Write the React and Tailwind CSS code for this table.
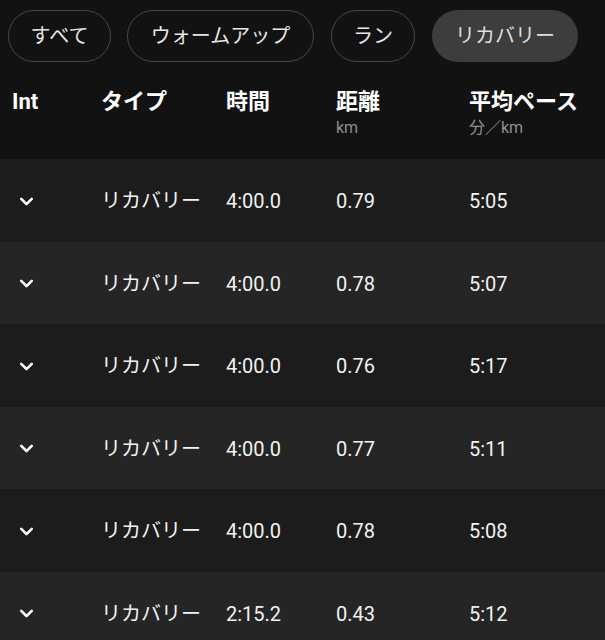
import { ChevronDown } from "lucide-react";

const tabs = [
  { label: "すべて", w: "w-[103px]", ml: "ml-2", active: false },
  { label: "ウォームアップ", w: "w-[187px]", ml: "ml-4", active: false },
  { label: "ラン", w: "w-[84px]", ml: "ml-[17px]", active: false },
  { label: "リカバリー", w: "w-[146px]", ml: "ml-[17px]", active: true },
];

const rows = [
  ["リカバリー", "4:00.0", "0.79", "5:05"],
  ["リカバリー", "4:00.0", "0.78", "5:07"],
  ["リカバリー", "4:00.0", "0.76", "5:17"],
  ["リカバリー", "4:00.0", "0.77", "5:11"],
  ["リカバリー", "4:00.0", "0.78", "5:08"],
  ["リカバリー", "2:15.2", "0.43", "5:12"],
];

export default function App() {
  return (
    <div
      className="w-[605px] h-[640px] overflow-hidden bg-[#121212] text-white"
      style={{ fontFamily: 'Roboto, "Noto Sans CJK JP", sans-serif' }}
    >
      {/* Filter pills */}
      <div className="flex pt-[10px] whitespace-nowrap">
        {tabs.map((t) => (
          <div
            key={t.label}
            className={
              t.w + " " + t.ml + " shrink-0 " +
              (t.active
                ? "h-[52px] rounded-full flex items-center justify-center bg-[#3d3d3d] text-[#dedede] text-[20px]"
                : "h-[52px] rounded-full flex items-center justify-center border-[1.5px] border-[#474747] text-[#e6e6e6] text-[20px]")
            }
          >
            {t.label}
          </div>
        ))}
      </div>

      {/* Header */}
      <div className="flex h-[97px] pt-[27px] pl-3 text-[22px] font-bold leading-[26px]">
        <div className="w-[89px]">Int</div>
        <div className="w-[125px]">タイプ</div>
        <div className="w-[110px]">時間</div>
        <div className="w-[133px]">
          <div>距離</div>
          <div className="text-[16px] font-normal text-[#8f8f8f] leading-[20px] mt-[3px]">km</div>
        </div>
        <div>
          <div>平均ペース</div>
          <div className="text-[16px] font-normal text-[#8f8f8f] leading-[20px] mt-[3px]">分／km</div>
        </div>
      </div>

      {/* Rows */}
      {rows.map((r, i) => (
        <div
          key={i}
          className={
            (i % 2 === 0 ? "bg-[#1c1c1c] " : "bg-[#252525] ") +
            "flex items-center h-[82.5px] pt-[2px] text-[20px] text-[#f2f2f2]"
          }
        >
          <div className="w-[101px] pl-[16px]">
            <ChevronDown size={21} strokeWidth={3} className="text-white" />
          </div>
          <div className="w-[125px]">{r[0]}</div>
          <div className="w-[110px]">{r[1]}</div>
          <div className="w-[133px]">{r[2]}</div>
          <div>{r[3]}</div>
        </div>
      ))}
    </div>
  );
}
